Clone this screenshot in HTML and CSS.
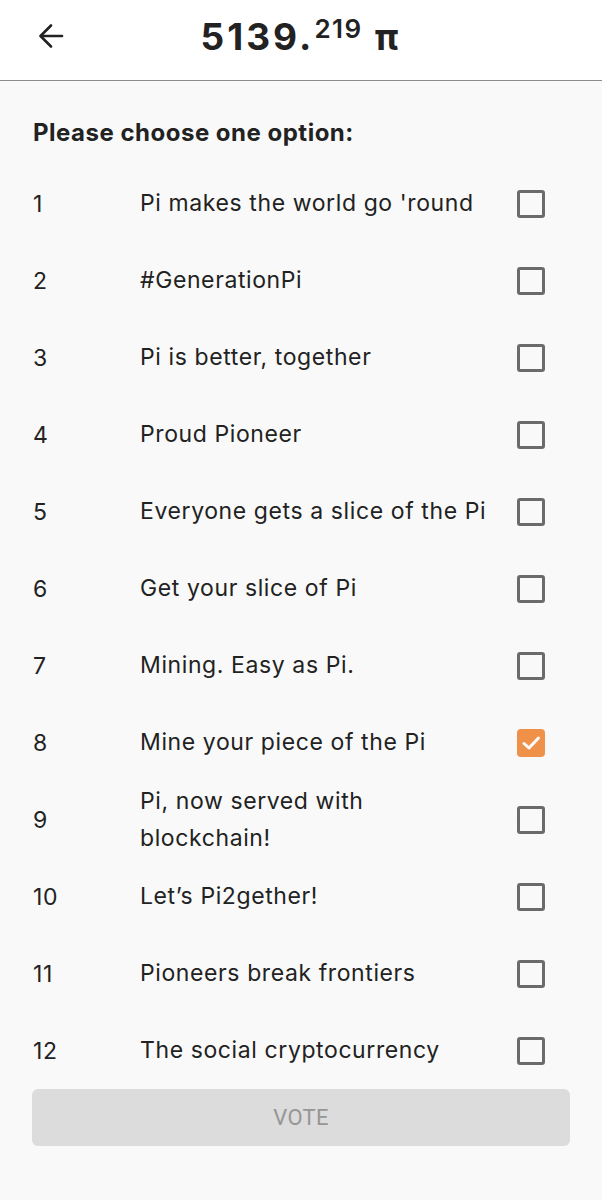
FILE: index.html
```html
<!DOCTYPE html>
<html lang="en">
<head>
    <meta charset="UTF-8">
    <meta name="viewport" content="width=device-width, initial-scale=1.0">
    <title>Vote</title>
    <link rel="stylesheet" href="styles.css">
</head>
<body>
    <!-- Top bar with balance -->
    <header class="topbar">
        <button type="button" class="back-button" aria-label="Back">
            <svg width="28" height="28" viewBox="0 0 28 28" fill="none" stroke="#222" stroke-width="2.6" stroke-linecap="round" stroke-linejoin="round">
                <path d="M25 14H4"/>
                <path d="M14 3.5L3.5 14L14 24.5"/>
            </svg>
        </button>
        <div class="balance">5139.<sup>219</sup><span class="pi">π</span></div>
    </header>

    <main class="poll">
        <h2 class="poll-title">Please choose one option:</h2>

        <ul class="options">
            <li class="option"><span class="num">1</span><span class="label">Pi makes the world go 'round</span><span class="box"></span></li>
            <li class="option"><span class="num">2</span><span class="label">#GenerationPi</span><span class="box"></span></li>
            <li class="option"><span class="num">3</span><span class="label">Pi is better, together</span><span class="box"></span></li>
            <li class="option"><span class="num">4</span><span class="label">Proud Pioneer</span><span class="box"></span></li>
            <li class="option"><span class="num">5</span><span class="label">Everyone gets a slice of the Pi</span><span class="box"></span></li>
            <li class="option"><span class="num">6</span><span class="label">Get your slice of Pi</span><span class="box"></span></li>
            <li class="option"><span class="num">7</span><span class="label">Mining. Easy as Pi.</span><span class="box"></span></li>
            <li class="option"><span class="num">8</span><span class="label">Mine your piece of the Pi</span>
                <span class="box checked">
                    <svg width="28" height="28" viewBox="0 0 28 28" fill="none" stroke="#fff" stroke-width="3" stroke-linecap="round" stroke-linejoin="round">
                        <path d="M7 14.5L12 19L21.5 9"/>
                    </svg>
                </span>
            </li>
            <li class="option"><span class="num">9</span><span class="label">Pi, now served with blockchain!</span><span class="box"></span></li>
            <li class="option"><span class="num">10</span><span class="label">Let’s Pi2gether!</span><span class="box"></span></li>
            <li class="option"><span class="num">11</span><span class="label">Pioneers break frontiers</span><span class="box"></span></li>
            <li class="option"><span class="num">12</span><span class="label">The social cryptocurrency</span><span class="box"></span></li>
        </ul>

        <button type="button" class="vote-button" disabled>VOTE</button>
    </main>
</body>
</html>
```

FILE: styles.css
```css
/* Global */
body {
    margin: 0;
    font-family: 'Inter', 'Noto Sans', sans-serif;
    background-color: #f9f9f9;
    color: #222;
}

/* Top bar */
.topbar {
    height: 80px;
    background-color: #fff;
    border-bottom: 1px solid #8c8c8c;
    display: flex;
    align-items: center;
    justify-content: center;
    position: relative;
}

.back-button {
    position: absolute;
    left: 37px;
    top: 22px;
    background: none;
    border: none;
    padding: 0;
    width: 28px;
    height: 28px;
    cursor: pointer;
}

.balance {
    font-size: 37px;
    font-weight: 700;
    letter-spacing: 3px;
    color: #222;
    margin-top: -8px;
}

.balance sup {
    font-size: 26px;
    font-weight: 600;
    letter-spacing: 1.5px;
    vertical-align: 12px;
    margin-left: 0;
}

.balance .pi {
    margin-left: 12px;
}

/* Poll */
.poll {
    padding: 37px 32px 0;
}

.poll-title {
    font-size: 24px;
    font-weight: 700;
    letter-spacing: 0.5px;
    line-height: 30px;
    margin: 0 0 17px 1px;
}

.options {
    list-style: none;
    margin: 0;
    padding: 0;
}

.option {
    display: grid;
    grid-template-columns: 108px 1fr 28px;
    align-items: center;
    min-height: 77px;
    padding-right: 25px;
    font-size: 23px;
    letter-spacing: 0.6px;
}

.num {
    padding-left: 1px;
}

.label {
    line-height: 37px;
    max-width: 352px;
}

.box {
    width: 28px;
    height: 28px;
    box-sizing: border-box;
    border: 3px solid #6b6b6b;
    border-radius: 3px;
    display: flex;
    align-items: center;
    justify-content: center;
}

.box.checked {
    border: none;
    background-color: #f0914a;
    border-radius: 4px;
}

.vote-button {
    display: block;
    width: 100%;
    height: 57px;
    margin-top: 0;
    border: none;
    border-radius: 6px;
    background-color: #dcdcdc;
    color: #969696;
    font-family: 'Roboto', sans-serif;
    font-size: 22px;
    font-weight: 400;
    letter-spacing: 0.3px;
}
```
